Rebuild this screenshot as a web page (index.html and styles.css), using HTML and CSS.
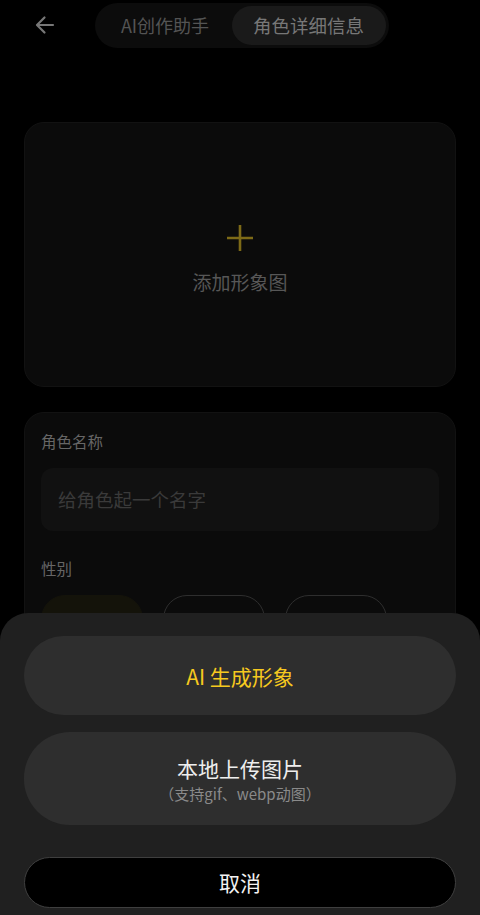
FILE: index.html
```html
<!DOCTYPE html>
<html lang="zh-CN">
<head>
  <meta charset="UTF-8" />
  <meta name="viewport" content="width=device-width, initial-scale=1.0"/>
  <title>角色详细信息</title>
  <link rel="stylesheet" href="styles.css">
</head>
<body>
  <div class="header">
    <div class="back">
      <svg width="22" height="22" viewBox="0 0 22 22" fill="none" stroke="#777" stroke-width="2.2" stroke-linecap="round" stroke-linejoin="round">
        <path d="M19 11H3.5M10.5 3.5L3 11l7.5 7.5"/>
      </svg>
    </div>
    <div class="tabs">
      <div class="tab">AI创作助手</div>
      <div class="tab active">角色详细信息</div>
    </div>
    <div></div>
  </div>

  <div class="card upload">
    <svg width="30" height="30" viewBox="0 0 30 30" fill="none" stroke="#7d6a17" stroke-width="2.6">
      <path d="M15 2v26M2 15h26"/>
    </svg>
    <div class="upload-text">添加形象图</div>
  </div>

  <div class="card form">
    <div class="label">角色名称</div>
    <div class="input">给角色起一个名字</div>
    <div class="label gap">性别</div>
    <div class="options">
      <div class="opt selected">男性</div>
      <div class="opt">女性</div>
      <div class="opt">其他</div>
    </div>
  </div>

  <div class="sheet">
    <div class="sheet-btn ai">AI 生成形象</div>
    <div class="sheet-btn local">
      <div class="main">本地上传图片</div>
      <div class="sub">（支持gif、webp动图）</div>
    </div>
    <div class="cancel">取消</div>
  </div>
</body>
</html>
```

FILE: styles.css
```css
body {
  margin: 0;
  background: #000;
  font-family: "Noto Sans CJK SC", "Noto Sans", sans-serif;
  width: 480px;
  height: 915px;
  overflow: hidden;
}
.header {
  display: grid;
  grid-template-columns: 1fr auto 1fr;
  align-items: center;
  height: 50px;
}
.back {
  padding-left: 34px;
  display: flex;
  align-items: center;
}
.tabs {
  display: flex;
  background: #0c0c0c;
  border-radius: 23px;
  padding: 3px;
  margin-left: 4px;
}
.tab {
  height: 39px;
  line-height: 39px;
  padding: 0 23px;
  font-size: 18px;
  color: #545454;
  border-radius: 20px;
}
.tab.active {
  background: #1a1a1a;
  color: #777;
  font-size: 18.5px;
  padding: 0 22px 0 21px;
}
.card {
  background: #0b0b0b;
  border: 1px solid #121212;
  border-radius: 20px;
  margin: 0 24px;
}
.upload {
  margin-top: 72px;
  height: 263px;
  box-sizing: content-box;
  display: flex;
  flex-direction: column;
  align-items: center;
  justify-content: center;
  padding-top: 8px;
  height: 255px;
}
.upload-text {
  margin-top: 15px;
  font-size: 19px;
  line-height: 27px;
  color: #575757;
}
.form {
  margin-top: 25px;
  padding: 17px 16px 40px;
}
.label {
  font-size: 15.5px;
  line-height: 22px;
  color: #666;
}
.label.gap {
  margin-top: 26px;
}
.input {
  margin-top: 16px;
  height: 63px;
  line-height: 63px;
  background: #111;
  border-radius: 12px;
  padding-left: 17px;
  font-size: 18.5px;
  color: #3a3a3a;
}
.options {
  display: flex;
  gap: 20px;
  margin-top: 16px;
}
.opt {
  width: 100px;
  height: 48px;
  line-height: 48px;
  text-align: center;
  border: 1px solid #2e2e2e;
  border-radius: 24px;
  font-size: 16px;
  color: #555;
}
.opt.selected {
  background: #14130a;
  border-color: #14130a;
  color: #6d6012;
}
.sheet {
  position: fixed;
  left: 0;
  right: 0;
  bottom: 0;
  height: 302px;
  box-sizing: border-box;
  background: #202020;
  border-radius: 28px 28px 0 0;
  padding: 23px 24px 0;
}
.sheet-btn {
  background: #2e2e2e;
  border-radius: 46px;
  text-align: center;
  display: flex;
  flex-direction: column;
  justify-content: center;
}
.ai {
  height: 79px;
  font-size: 21px;
  color: #f6c91f;
}
.local {
  height: 93px;
  margin-top: 17px;
}
.local .main {
  font-size: 21px;
  color: #eee;
  line-height: 28px;
}
.local .sub {
  font-size: 15px;
  color: #8a8a8a;
  line-height: 20px;
  margin-top: 2px;
}
.cancel {
  margin-top: 32px;
  height: 51px;
  box-sizing: border-box;
  line-height: 49px;
  background: #000;
  border: 1px solid #3f3f3f;
  border-radius: 26px;
  text-align: center;
  font-size: 21px;
  color: #f2f2f2;
}
```
